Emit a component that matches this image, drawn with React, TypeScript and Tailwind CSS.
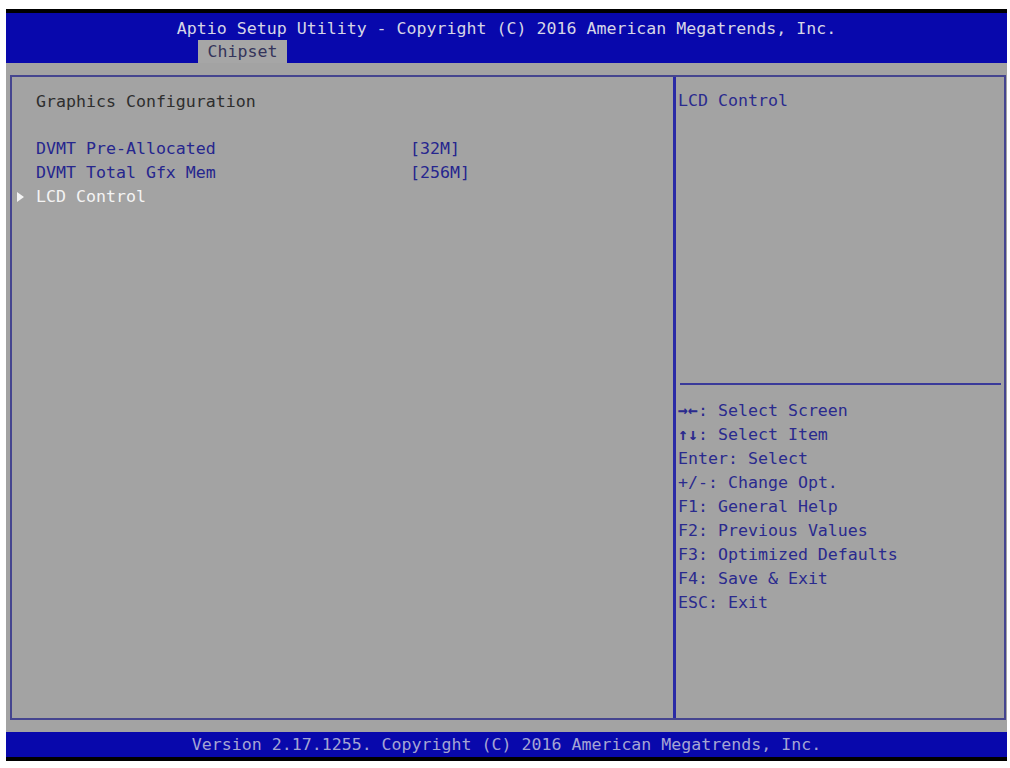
const items = [
    { label: 'DVMT Pre-Allocated', value: '[32M]' },
    { label: 'DVMT Total Gfx Mem', value: '[256M]' },
];

const help = [
    { key: '→←', text: ': Select Screen', bold: true },
    { key: '↑↓', text: ': Select Item', bold: true },
    { key: 'Enter', text: ': Select' },
    { key: '+/-', text: ': Change Opt.' },
    { key: 'F1', text: ': General Help' },
    { key: 'F2', text: ': Previous Values' },
    { key: 'F3', text: ': Optimized Defaults' },
    { key: 'F4', text: ': Save & Exit' },
    { key: 'ESC', text: ': Exit' },
];

const App: React.FC = () => {
    return (
        <div
            className="w-[1010px] h-[768px] bg-white pt-[9px] pl-[6px] text-[16.6px] leading-[24px] whitespace-pre"
            style={{ fontFamily: '"DejaVu Sans Mono", "Liberation Mono", monospace' }}
        >
            <div className="w-[1001px] flex flex-col">
                {/* header */}
                <div className="h-[4px] bg-black" />
                <div className="h-[50px] bg-[#0808ac] flex flex-col">
                    <div className="mt-[4px] h-[23px] text-center text-[#d6d6e6]">
                        Aptio Setup Utility - Copyright (C) 2016 American Megatrends, Inc.
                    </div>
                    <div className="flex h-[23px] pl-[192px]">
                        <div className="w-[89px] bg-[#a6a6a6] text-[#34345a] text-center leading-[24px]">
                            Chipset
                        </div>
                    </div>
                </div>

                {/* body */}
                <div className="bg-[#a3a3a3] pt-[12px] pb-[12px] pl-[4px] pr-[1px]">
                    <div className="h-[645px] border-2 border-[#45458f] flex">
                        <div className="w-[661px] pt-[13px] flex flex-col">
                            <div className="pl-[24px] text-[#2e2e2e]">Graphics Configuration</div>
                            <div className="h-[23px]" />
                            {items.map(it => (
                                <div key={it.label} className="flex pl-[24px] text-[#26268e]">
                                    <div className="w-[374px]">{it.label}</div>
                                    <div>{it.value}</div>
                                </div>
                            ))}
                            <div className="flex items-center pl-[5px] text-[#f4f4f4]">
                                <svg width="8" height="10" viewBox="0 0 8 10" className="mr-[11px]">
                                    <path d="M0 0 L7 5 L0 10 Z" fill="#f4f4f4" />
                                </svg>
                                <span>LCD Control</span>
                            </div>
                        </div>
                        <div className="w-[3px] bg-[#2a2aa6]" />
                        <div className="flex-1 flex flex-col pl-[2px]">
                            <div className="h-[306px] pt-[12px] text-[#2a2a8e]">LCD Control</div>
                            <div className="h-[2px] bg-[#3a3a9a] mr-[3px] ml-[2px]" />
                            <div className="pt-[14px] flex flex-col text-[#2a2a8e]">
                                {help.map(h => (
                                    <div key={h.key} className="h-[24px] flex">
                                        <span className={h.bold ? 'font-bold' : ''}>{h.key}</span>
                                        <span>{h.text}</span>
                                    </div>
                                ))}
                            </div>
                        </div>
                    </div>
                </div>

                {/* footer */}
                <div className="h-[25px] bg-[#0808ac] text-center text-[#a4a4d4] leading-[26px]">
                    Version 2.17.1255. Copyright (C) 2016 American Megatrends, Inc.
                </div>
                <div className="h-[4px] bg-black" />
            </div>
        </div>
    );
};

export default App;
